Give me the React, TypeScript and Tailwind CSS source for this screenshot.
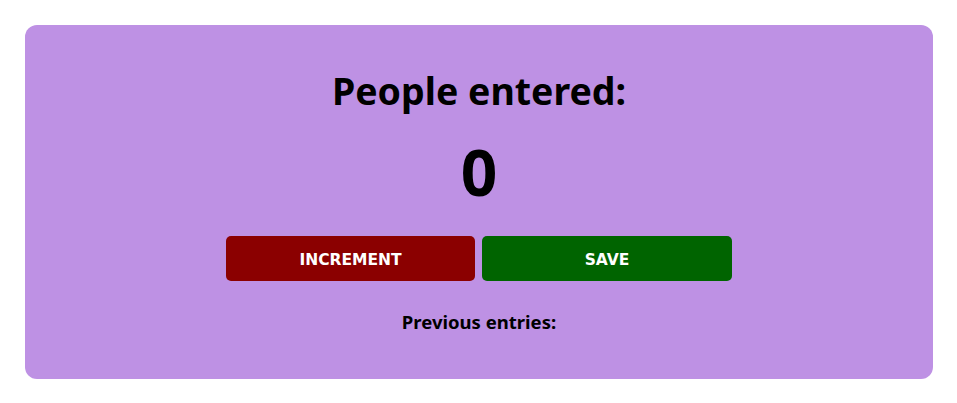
export default function App() {
  return (
    <div className="w-[957px] h-[403px] bg-white pt-[25px] pl-[25px] font-['Noto_Sans',_'Open_Sans',_sans-serif]">
      <div className="w-[908px] h-[354px] rounded-[12px] bg-[#be91e4] flex flex-col items-center pt-[42px]">
        <h1 className="text-[37.5px] leading-[48px] font-bold text-black">People entered:</h1>
        <div className="mt-[17px] text-[64px] leading-[80px] font-bold text-black">0</div>
        <div className="mt-[24px] flex gap-[7px] font-['DejaVu_Sans',_Verdana,_sans-serif]">
          <button className="w-[249px] h-[45px] rounded-[5px] bg-[#8b0000] text-white text-[15.5px] font-bold pt-[4px]">
            INCREMENT
          </button>
          <button className="w-[250px] h-[45px] rounded-[5px] bg-[#006400] text-white text-[15.5px] font-bold pt-[4px]">
            SAVE
          </button>
        </div>
        <p className="mt-[29px] text-[18.5px] leading-[24px] font-bold text-black">Previous entries:</p>
      </div>
    </div>
  );
}
